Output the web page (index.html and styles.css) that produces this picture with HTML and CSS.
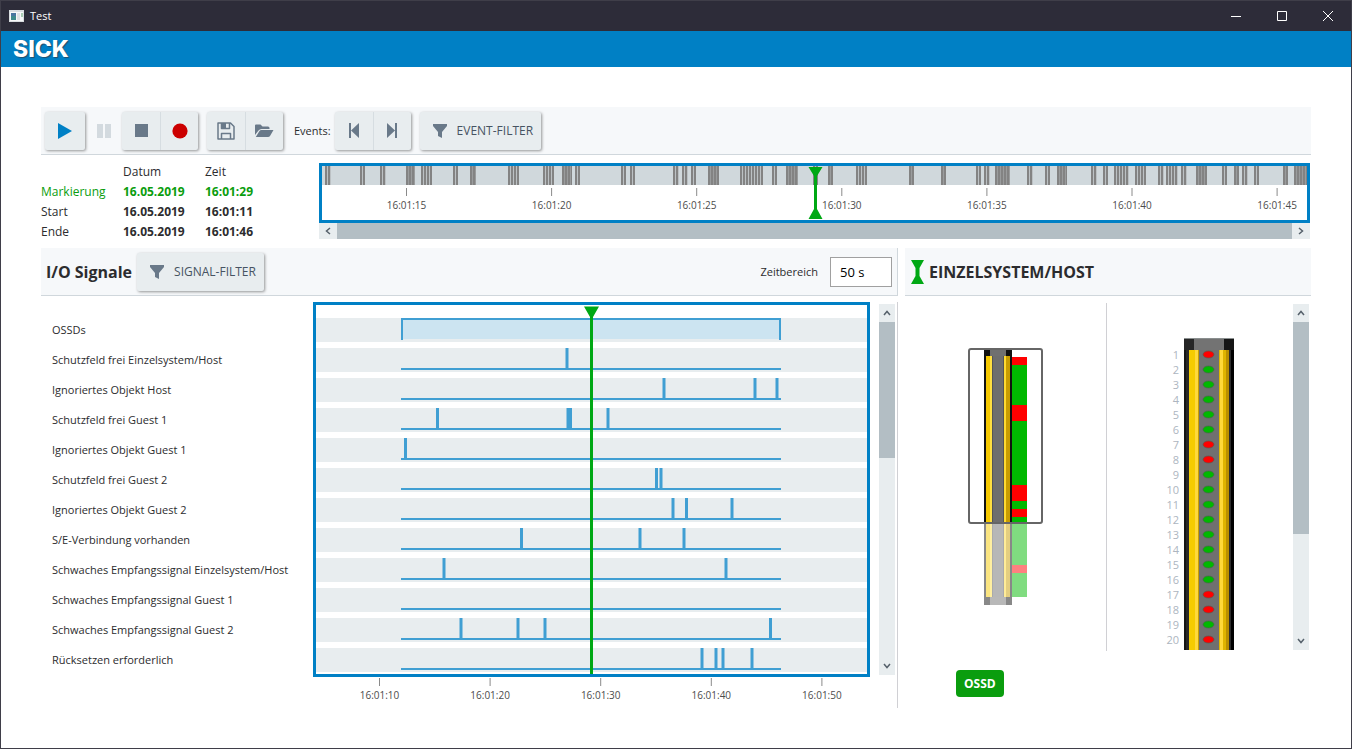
FILE: index.html
```html
<!DOCTYPE html>
<html lang="de">
<head>
<meta charset="utf-8">
<title>Test</title>
<link rel="stylesheet" href="styles.css">
</head>
<body>
<div class="window">
  <header class="titlebar">
    <svg class="app-icon" width="15" height="12" viewBox="0 0 15 12" aria-hidden="true"><rect width="15" height="12" fill="#d9dde0"/><rect x="1" y="2" width="13" height="9" fill="#f7f8f9"/><rect x="2" y="3" width="5" height="7" fill="#3f8a8c"/><rect x="2" y="3" width="5" height="3" fill="#4a76a0"/><rect x="8" y="3" width="3" height="7" fill="#dfe2e4"/><rect x="12" y="3" width="2" height="4" fill="#a9cdb4"/></svg>
    <span class="window-name">Test</span>
    <button class="win-btn" aria-label="Minimieren"><svg width="10" height="10"><path d="M0 5.5h10"/></svg></button>
    <button class="win-btn" aria-label="Maximieren"><svg width="10" height="10"><path d="M.5.5h9v9h-9z"/></svg></button>
    <button class="win-btn" aria-label="Schließen"><svg width="10" height="10"><path d="M0 0l10 10M10 0L0 10"/></svg></button>
  </header>
  <div class="brand"><span class="logo">SICK</span></div>

  <main class="content">
    <div class="toolbar">
      <div class="btn-group play-group">
        <button class="btn" aria-label="Wiedergabe"><svg width="16" height="16" viewBox="0 0 16 16"><path d="M1 0l14 8-14 8z" fill="#0080c5"/></svg></button>
      </div>
      <button class="btn btn-off" aria-label="Pause" disabled><svg width="14" height="14" viewBox="0 0 14 14"><path d="M0 0h6v14H0zM8 0h6v14H8z" fill="#d3dadf"/></svg></button>
      <div class="btn-group">
        <button class="btn" aria-label="Stopp"><svg width="13" height="13"><path d="M0 0h13v13H0z" fill="#697989"/></svg></button>
        <button class="btn" aria-label="Aufnahme"><svg width="16" height="16"><circle cx="8" cy="8" r="7.6" fill="#c00"/></svg></button>
      </div>
      <div class="btn-group">
        <button class="btn" aria-label="Speichern"><svg width="18" height="18" viewBox="0 0 18 18"><path d="M1 1h12.5L17 4.500V17H1zM4.500 1v5.500h8V1M4.500 17v-5.500h9V17" fill="none" stroke="#697989" stroke-width="1.500" stroke-linejoin="round"/><path d="M5 1h4v5H5z" fill="#697989"/></svg></button>
        <button class="btn" aria-label="Öffnen"><svg width="19" height="14" viewBox="0 0 19 14"><path d="M0 11V1.500Q0 .5 1 .5h4.500L7.500 2.500H13q1.500 0 1.500 1.500v1H6.500Q4.500 5 3.500 6.500z" fill="#697989"/><path d="M.8 13L4.300 7.300Q5 6 6.500 6H18.500L15 12q-.6 1-2 1z" fill="#697989"/></svg></button>
      </div>
      <span class="toolbar-label">Events:</span>
      <div class="btn-group">
        <button class="btn" aria-label="Vorheriges Event"><svg width="12" height="15" viewBox="0 0 12 15"><path d="M1 0h2v15H1zM11 0v15L3 7.500z" fill="#697989"/></svg></button>
        <button class="btn" aria-label="Nächstes Event"><svg width="12" height="15" viewBox="0 0 12 15"><path d="M9 0h2v15H9zM1 0v15L9 7.500z" fill="#697989"/></svg></button>
      </div>
      <div class="btn-group"><button class="btn btn-text"><svg width="14" height="14" viewBox="0 0 14 14"><path d="M0 0h14v2L9 8v6l-4-2V8L0 2z" fill="#697989"/></svg>EVENT-FILTER</button></div>
    </div>

    <div class="overview">
      <table class="times">
        <thead><tr><td></td><th scope="col">Datum</th><th scope="col">Zeit</th></tr></thead>
        <tbody>
          <tr class="marked"><th scope="row">Markierung</th><td>16.05.2019</td><td>16:01:29</td></tr>
          <tr><th scope="row">Start</th><td>16.05.2019</td><td>16:01:11</td></tr>
          <tr><th scope="row">Ende</th><td>16.05.2019</td><td>16:01:46</td></tr>
        </tbody>
      </table>
      <div class="timeline">
        <svg class="timeline-plot" id="timeline" role="img" aria-label="Zeitleiste der Events"></svg>
        <div class="scroll scroll-h">
          <button class="scroll-btn" aria-label="Nach links"><svg width="6" height="8"><path d="M5 1L1.500 4 5 7"/></svg></button>
          <div class="thumb"></div>
          <button class="scroll-btn" aria-label="Nach rechts"><svg width="6" height="8"><path d="M1 1l3.500 3L1 7"/></svg></button>
        </div>
      </div>
    </div>

    <div class="panels">
      <section class="signals">
        <div class="panel-head">
          <h2>I/O Signale</h2>
          <div class="btn-group"><button class="btn btn-text"><svg width="14" height="14" viewBox="0 0 14 14"><path d="M0 0h14v2L9 8v6l-4-2V8L0 2z" fill="#697989"/></svg>SIGNAL-FILTER</button></div>
          <label class="range-label" for="range">Zeitbereich</label>
          <input class="range" id="range" type="text" value="50 s">
        </div>
        <div class="signals-body">
          <ul class="signal-names">
            <li>OSSDs</li><li>Schutzfeld frei Einzelsystem/Host</li><li>Ignoriertes Objekt Host</li><li>Schutzfeld frei Guest 1</li><li>Ignoriertes Objekt Guest 1</li><li>Schutzfeld frei Guest 2</li><li>Ignoriertes Objekt Guest 2</li><li>S/E-Verbindung vorhanden</li><li>Schwaches Empfangssignal Einzelsystem/Host</li><li>Schwaches Empfangssignal Guest 1</li><li>Schwaches Empfangssignal Guest 2</li><li>Rücksetzen erforderlich</li>
          </ul>
          <div class="chart">
            <svg class="chart-plot" id="chart" role="img" aria-label="Signalverläufe"></svg>
            <svg class="chart-axis" id="axis" aria-hidden="false"></svg>
          </div>
          <div class="scroll scroll-v">
            <button class="scroll-btn" aria-label="Nach oben"><svg width="8" height="6"><path d="M1 5l3-3.500L7 5"/></svg></button>
            <div class="thumb thumb-signals"></div>
            <button class="scroll-btn" aria-label="Nach unten"><svg width="8" height="6"><path d="M1 1l3 3.500L7 1"/></svg></button>
          </div>
        </div>
      </section>

      <section class="system">
        <div class="panel-head">
          <svg width="13" height="24" viewBox="0 0 13 24" aria-hidden="true"><path d="M0 0h13L8.500 8v8L13 24H0l4.500-8V8z" fill="#00a814"/></svg>
          <h2>EINZELSYSTEM/HOST</h2>
        </div>
        <div class="system-body">
          <div class="mini"><svg id="mini" width="78" height="260" role="img" aria-label="Geräteübersicht"></svg></div>
          <div class="detail">
            <svg id="device" width="100" height="312" role="img" aria-label="Strahlen 1 bis 20"></svg>
            <div class="scroll scroll-v">
              <button class="scroll-btn" aria-label="Nach oben"><svg width="8" height="6"><path d="M1 5l3-3.500L7 5"/></svg></button>
              <div class="thumb thumb-device"></div>
              <button class="scroll-btn" aria-label="Nach unten"><svg width="8" height="6"><path d="M1 1l3 3.500L7 1"/></svg></button>
            </div>
          </div>
        </div>
        <button class="ossd">OSSD</button>
      </section>
    </div>
  </main>
</div>
<script src="script.js"></script>
</body>
</html>
```
FILE: styles.css
```css
* { box-sizing: border-box; }
body {
  margin: 0;
  background: #fff;
  color: #2c2c2e;
  font: 12px/20px "Open Sans", "Noto Sans", sans-serif;
}
button, input { font: inherit; color: inherit; }
button { border: 0; padding: 0; background: none; }
svg { display: block; flex: none; }
h2 { margin: 0; font-size: 16px; font-weight: 700; }

.window {
  display: flex;
  flex-direction: column;
  min-height: 100vh;
  border: 1px solid #3f3e49;
}
.titlebar {
  display: flex;
  align-items: center;
  height: 30px;
  padding-left: 8px;
  background: #2d2c39;
  color: #fff;
}
.window-name { flex: 1; margin-left: 6px; font-size: 11px; }
.win-btn {
  display: flex;
  align-items: center;
  justify-content: center;
  width: 46px;
  height: 30px;
}
.win-btn path { fill: none; stroke: #fff; }
.brand {
  display: flex;
  align-items: center;
  height: 36px;
  padding-left: 12px;
  background: #0080c5;
}
.logo {
  color: #fff;
  font: 800 23px/36px Inter, sans-serif;
  text-shadow: 1px 1px 1px #234e6c;
}
.content { flex: 1; padding: 40px; }

.toolbar, .panel-head {
  display: flex;
  align-items: center;
  height: 48px;
  background: #f6f8fa;
  border-bottom: 1px solid #d0d7dc;
}
.toolbar { padding-left: 4px; }
.toolbar > .btn-group { margin-right: 9px; }
.toolbar > .play-group { margin-right: 0; }
.toolbar-label { margin: 0 4px 0 2px; font-size: 11px; }
.btn-group {
  display: flex;
  border-radius: 2px;
  background: #e8edef;
  box-shadow: 1px 1px 3px rgba(0, 0, 0, 0.4);
}
.btn {
  display: flex;
  align-items: center;
  justify-content: center;
  width: 38px;
  height: 38px;
}
.btn + .btn { border-left: 1px solid #d6dde1; }
.play-group .btn { width: 40px; }
.toolbar .btn-off { width: 37px; border-left: 0; }
.btn-text {
  gap: 10px;
  width: auto;
  padding: 0 8px 0 13px;
  color: #465362;
}

.overview {
  display: grid;
  grid-template-columns: 278px minmax(0, 1fr);
  align-items: start;
  padding: 7px 1px 6px 0;
}
.times { border-collapse: collapse; table-layout: fixed; width: 246px; }
.times th, .times td { width: 82px; height: 20px; padding: 0; text-align: left; }
.times th { font-weight: 400; }
.times td { font-weight: 700; }
.times .marked { color: #0a9d0e; }
.timeline { margin-top: 1px; }
.timeline-plot {
  width: 100%;
  height: 60px;
  border: 3px solid #0080c5;
}
.axis-text { fill: #4c4c4c; font-size: 11px; text-anchor: middle; }
.timeline .axis-text, .chart .axis-text { font-size: 10px; }

.scroll { display: flex; background: #e8edef; }
.scroll-v { flex-direction: column; width: 16px; }
.scroll-h { height: 16px; }
.scroll-btn {
  display: flex;
  align-items: center;
  justify-content: center;
  flex: none;
  width: 16px;
  height: 18px;
}
.scroll-h .scroll-btn { width: 18px; height: 16px; }
.scroll-btn path { fill: none; stroke: #56616b; stroke-width: 1.5; }
.scroll-v .scroll-btn:last-child { margin-top: auto; }
.thumb { background: #b3bec4; }
.scroll-h .thumb { flex: 1; }
.thumb-signals { height: 136px; }
.thumb-device { height: 212px; }

.panels {
  display: grid;
  grid-template-columns: minmax(0, 857fr) minmax(0, 406fr);
  gap: 7px;
}
.signals .panel-head { padding: 0 5px; border-right: 1px solid #d0d7dc; }
.signals .btn-group { margin-left: 5px; }
.range-label { margin-left: auto; font-size: 11px; }
.range {
  width: 62px;
  height: 30px;
  margin-left: 12px;
  padding: 0 9px;
  border: 1px solid #a0a0a0;
  background: #fff;
  color: #000;
  font-size: 13px;
}
.signals-body {
  display: grid;
  grid-template-columns: 272px minmax(0, 1fr) 16px;
  margin-top: 6px;
  padding-right: 2px;
  border-right: 1px solid #d0d0d4;
}
.signal-names { margin: 0; padding: 13px 0 0 11px; list-style: none; font-size: 11px; line-height: 30px; }
.chart { margin-right: 9px; }
.chart-plot { width: 100%; height: 375px; border: 3px solid #0080c5; }
.chart-axis { width: 100%; height: 31px; }
.signals .scroll-v { margin: 2px 0 33px; }

.system .panel-head { gap: 5px; padding-left: 6px; }
.system-body { display: grid; grid-template-columns: 202px minmax(0, 1fr); margin-top: 7px; }
.mini {
  display: flex;
  align-items: center;
  justify-content: center;
  height: 348px;
  border-right: 1px solid #d0d0d4;
}
.detail { display: flex; padding: 1px 2px 1px 18px; }
#device { margin: 34px auto 0; }
.beam-no { fill: #adb5c0; font-size: 11px; text-anchor: end; }
.ossd {
  display: block;
  height: 27px;
  margin: 19px 0 0 51px;
  padding: 0 8px;
  border-radius: 4px;
  background: #0a9d0e;
  color: #fff;
  font-weight: 700;
}
```
FILE: script.js
```js
const NS = 'http://www.w3.org/2000/svg';

function add(parent, tag, attrs, text) {
  const el = document.createElementNS(NS, tag);
  for (const key in attrs) el.setAttribute(key, attrs[key]);
  if (text) el.textContent = text;
  parent.appendChild(el);
  return el;
}

/* Overview timeline: positions are converted to shares of the visible range. */
const timeline = document.getElementById('timeline');
const tx = v => (v / 985 * 100) + '%';
add(timeline, 'rect', { width: '100%', height: 19, fill: '#d0d8dc' });
const bursts = [
  [3, 6], [38, 5], [58, 6], [84, 9, 1], [99, 11], [131, 5], [148, 6, 1], [186, 11], [221, 11],
  [240, 10, 1], [253, 5], [299, 5], [308, 5], [351, 6], [360, 6], [369, 5], [386, 11, 1], [418, 23],
  [450, 5], [464, 12, 1], [491, 5], [506, 5, 1], [534, 11], [587, 5, 1], [619, 5, 1], [654, 5], [662, 6],
  [673, 15, 1], [705, 6], [723, 5], [735, 10, 1], [769, 6], [781, 5], [792, 15], [813, 11], [836, 6],
  [844, 12], [859, 6], [874, 11, 1], [900, 5], [912, 5, 1], [920, 6], [932, 5], [961, 5, 1], [972, 13, 1]
];
for (const [start, width, dense] of bursts) {
  const g = add(timeline, 'svg', { x: tx(start), width, height: 19 });
  add(g, 'rect', { width, height: 19, fill: dense ? '#9a9c9d' : '#bcc1c4' });
  for (let x = 0; x < width; x += 3) add(g, 'rect', { x, width: 2, height: 19, fill: '#838383' });
}
['15', '20', '25', '30', '35', '40', '45'].forEach((s, i) => {
  const x = 84.5 + i * 145.1;
  add(timeline, 'line', { x1: tx(x), x2: tx(x), y1: 22, y2: 30, stroke: '#8a8a8a' });
  add(timeline, 'text', { x: tx(x), y: 43, class: 'axis-text' }, '16:01:' + s);
});
const cursor = add(timeline, 'svg', { x: tx(493.5), overflow: 'visible' });
add(cursor, 'path', { d: 'M-7 1H7L1.500 10V43L7 53H-7L-1.500 43V10z', fill: '#00a814' });

/* Signal chart: one band per signal, pulses at their time positions. */
const chart = document.getElementById('chart');
const cx = v => (v / 551 * 100) + '%';
const pulses = [
  [], [251], [348, 439, 461], [121.5, 252, 254.5, 292], [89.5], [340.5, 345], [357, 370.5, 416],
  [205.5, 324, 368], [128, 410], [], [145, 202, 229, 454.5], [386, 400, 407, 436]
];
pulses.forEach((list, row) => {
  const y = 13 + row * 30;
  add(chart, 'rect', { y, width: '100%', height: 24, fill: '#e8edef' });
  if (row === 0) {
    add(chart, 'rect', { x: cx(85), y, width: cx(380), height: 21, fill: '#cce4f1' });
    add(chart, 'rect', { x: cx(85), y, width: cx(380), height: 2, fill: '#409fd3' });
    for (const x of [86, 464]) add(chart, 'line', { x1: cx(x), x2: cx(x), y1: y, y2: y + 22, stroke: '#409fd3', 'stroke-width': 2 });
    return;
  }
  add(chart, 'rect', { x: cx(85), y: y + 20, width: cx(380), height: 2, fill: '#409fd3' });
  for (const x of list) add(chart, 'line', { x1: cx(x), x2: cx(x), y1: y, y2: y + 20, stroke: '#409fd3', 'stroke-width': 3 });
});
const marker = add(chart, 'svg', { x: cx(275.5), overflow: 'visible' });
add(marker, 'path', { d: 'M-7.500 1.500H7.500L1.500 12V369H-1.500V12z', fill: '#00a814' });

const axis = document.getElementById('axis');
const ax = v => (v / 557 * 100) + '%';
['10', '20', '30', '40', '50'].forEach((s, i) => {
  const x = 66.5 + i * 110.6;
  add(axis, 'line', { x1: ax(x), x2: ax(x), y1: 1, y2: 9, stroke: '#8a8a8a' });
  add(axis, 'text', { x: ax(x), y: 22, class: 'axis-text' }, '16:01:' + s);
});

/* Light curtain housing, drawn as vertical strips. */
function strips(parent, list, y, height) {
  for (const [x, width, fill] of list) add(parent, 'rect', { x, y, width, height, fill });
}
const RED = '#ff0000', GREEN = '#00b800';

const mini = document.getElementById('mini');
strips(mini, [[17, 28, '#111'], [23, 16, '#707070']], 2, 256);
strips(mini, [[17, 2, '#111'], [19, 6, '#f5c800'], [23, 2, '#ffdf40'], [25, 12, '#6e6e6e'],
  [25, 1, '#555'], [36, 1, '#555'], [37, 2, '#ffd930'], [39, 4, '#c89c00'], [43, 2, '#111']], 9, 241);
let y = 10;
for (const [beams, color] of [[1, RED], [5, GREEN], [2, RED], [8, GREEN], [2, RED], [1, GREEN], [1, RED], [6, GREEN], [1, RED], [3, GREEN]]) {
  add(mini, 'rect', { x: 45, y, width: 15, height: beams * 8, fill: color });
  y += beams * 8;
}
add(mini, 'rect', { x: 17, y: 177, width: 44, height: 82, fill: '#fff', opacity: 0.5 });
add(mini, 'rect', { x: 2, y: 2, width: 73, height: 174, rx: 2, fill: 'none', stroke: '#666', 'stroke-width': 2 });

const device = document.getElementById('device');
strips(device, [[25, 50, '#262626'], [35, 30, '#737373'], [65, 10, '#161616']], 0, 12);
strips(device, [[25, 50, '#8a8f8f']], 0, 1);
strips(device, [[25, 2, '#151515'], [27, 3, '#292929'], [30, 6, '#f5cc00'], [36, 3, '#ffd93a'], [39, 1, '#c9a000'],
  [40, 20, '#707070'], [60, 1, '#e0b800'], [61, 3, '#ffd93a'], [64, 3, '#dfb400'], [67, 3, '#b98f00'],
  [70, 2, '#2c2c2c'], [72, 3, '#000']], 12, 300);
const blocked = [1, 7, 8, 17, 18, 20];
for (let n = 1; n <= 20; n++) {
  const cy = 2 + n * 15;
  add(device, 'text', { x: 20, y: cy + 4, class: 'beam-no' }, String(n));
  add(device, 'ellipse', { cx: 49.5, cy: cy - 0.5, rx: 5.5, ry: 3.5, fill: blocked.includes(n) ? RED : GREEN, stroke: '#4d5a4d', 'stroke-width': 0.6 });
}
```
